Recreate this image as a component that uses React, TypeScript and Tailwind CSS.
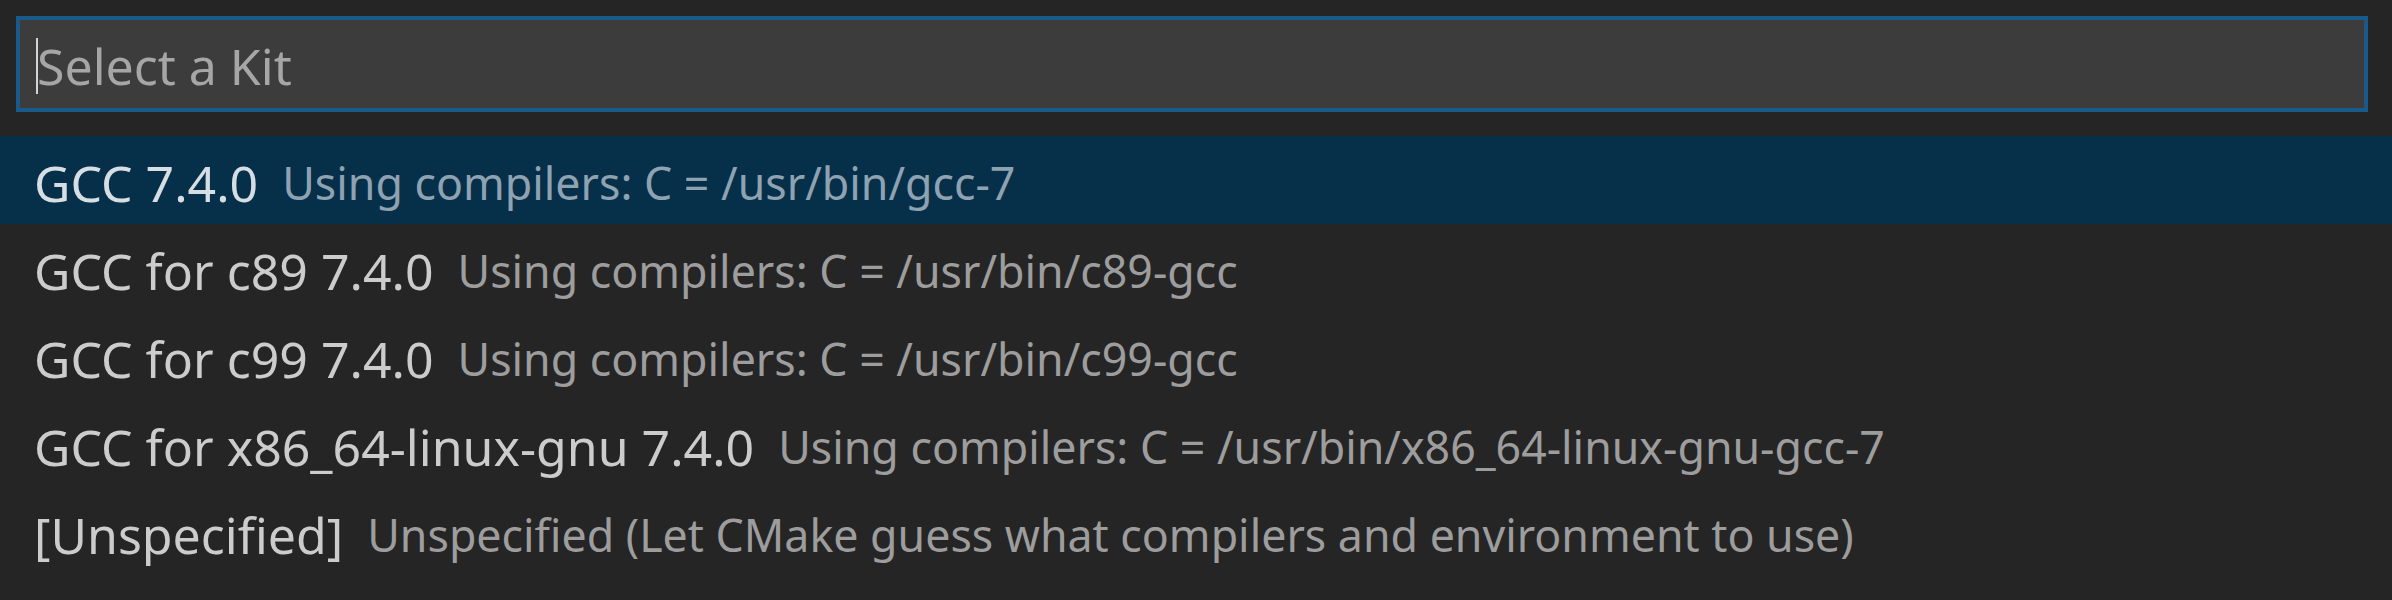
const kits = [
  { label: 'GCC 7.4.0', desc: 'Using compilers: C = /usr/bin/gcc-7' },
  { label: 'GCC for c89 7.4.0', desc: 'Using compilers: C = /usr/bin/c89-gcc' },
  { label: 'GCC for c99 7.4.0', desc: 'Using compilers: C = /usr/bin/c99-gcc' },
  { label: 'GCC for x86_64-linux-gnu 7.4.0', desc: 'Using compilers: C = /usr/bin/x86_64-linux-gnu-gcc-7' },
  { label: '[Unspecified]', desc: 'Unspecified (Let CMake guess what compilers and environment to use)' },
];

export default function App() {
  const active = 0;
  return (
    <div className="h-[600px] w-full overflow-hidden bg-[#252526] pt-4 font-['Noto_Sans',sans-serif]">
      {/* Quick pick input */}
      <div className="ml-4 mr-6 flex h-[96px] items-center border-4 border-[#1a5a8a] bg-[#3c3c3c] pl-4 pt-[3px]">
        <span className="h-[56px] w-[2px] bg-[#d4d4d4]" />
        <span className="-ml-px text-[50px] leading-none text-[#a6a6a6]">Select a Kit</span>
      </div>

      {/* Kit list */}
      <ul className="mt-6">
        {kits.map((k, i) => (
          <li
            key={k.label}
            className={`flex h-[88px] items-center whitespace-nowrap pl-[34px] pt-[6px] ${i === active ? 'bg-[#062f4a]' : ''}`}
          >
            <span className={`text-[50px] leading-none ${i === active ? 'text-[#d6dde3]' : 'text-[#cccccc]'}`}>{k.label}</span>
            <span className={`ml-[24px] text-[44.7px] leading-none ${i === active ? 'text-[#8ea2b1]' : 'text-[#9d9d9d]'}`}>{k.desc}</span>
          </li>
        ))}
      </ul>
    </div>
  );
}
